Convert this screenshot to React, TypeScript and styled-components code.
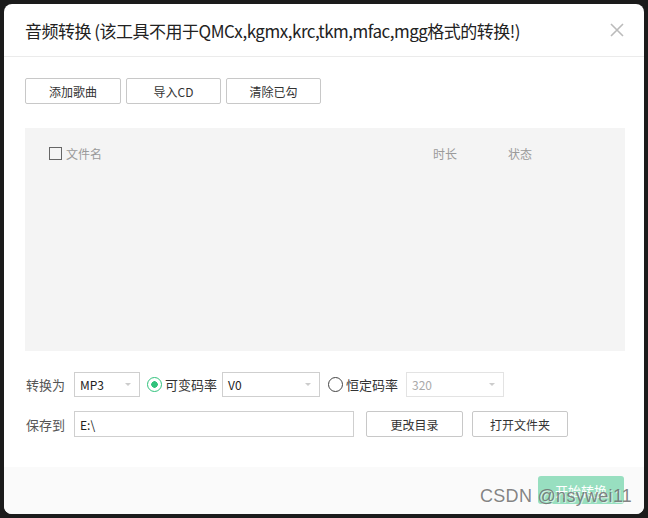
import styled, { createGlobalStyle } from 'styled-components';

const GlobalStyle = createGlobalStyle`
  html, body {
    margin: 0;
    padding: 0;
    background: #1b1b1b;
    font-family: "Noto Sans CJK SC", "Noto Sans", sans-serif;
  }
`;

const Page = styled.div`
  width: 648px;
  height: 518px;
  padding: 4px;
  box-sizing: border-box;
  position: relative;
`;

const Dialog = styled.div`
  width: 640px;
  height: 510px;
  background: #fff;
  border-radius: 8px;
  display: flex;
  flex-direction: column;
  overflow: hidden;
`;

const Header = styled.div`
  height: 52px;
  border-bottom: 1px solid #ebebeb;
  display: flex;
  align-items: center;
  justify-content: space-between;
  padding: 0 20px 0 21px;
  flex-shrink: 0;
`;

const Title = styled.h1`
  margin: 0;
  font-size: 17px;
  font-weight: 400;
  color: #222;
  letter-spacing: -0.5px;
`;

const Close = styled.button`
  border: none;
  background: none;
  padding: 0;
  width: 14px;
  height: 14px;
  display: flex;
  color: #bbb;
`;

const Body = styled.div`
  flex: 1;
  padding: 21px 19px 0 21px;
  display: flex;
  flex-direction: column;
`;

const Toolbar = styled.div`
  display: flex;
  gap: 5px;
`;

const Button = styled.button<{ $w?: number }>`
  width: ${({ $w }) => $w ?? 95}px;
  height: 26px;
  box-sizing: border-box;
  border: 1px solid #c8c8c8;
  border-radius: 2px;
  background: #fff;
  color: #333;
  font-family: inherit;
  font-size: 12px;
  padding: 0;
`;

const Table = styled.div`
  margin-top: 24px;
  height: 223px;
  background: #f4f4f4;
`;

const TableHead = styled.div`
  display: grid;
  grid-template-columns: 384px 75px auto;
  align-items: center;
  padding: 17px 0 0 24px;
  color: #9a9a9a;
  font-size: 12px;
`;

const NameCell = styled.div`
  display: flex;
  align-items: center;
  gap: 4px;
`;

const CheckBox = styled.span`
  width: 11px;
  height: 11px;
  border: 1px solid #666;
  display: inline-block;
`;

const FormRow = styled.div<{ $top: number }>`
  display: flex;
  align-items: center;
  margin-top: ${({ $top }) => $top}px;
  font-size: 13px;
  color: #444;
`;

const Label = styled.span`
  width: 48px;
  padding-left: 1px;
  flex-shrink: 0;
  color: #555;
`;

const Select = styled.div<{ $w: number; $disabled?: boolean }>`
  width: ${({ $w }) => $w}px;
  height: 25px;
  box-sizing: border-box;
  border: 1px solid ${({ $disabled }) => ($disabled ? '#e3e3e3' : '#cfcfcf')};
  display: flex;
  align-items: center;
  justify-content: space-between;
  padding: 0 8px 0 5px;
  font-size: 12px;
  color: ${({ $disabled }) => ($disabled ? '#aaa' : '#222')};
  background: #fff;
`;

const Caret = styled.span`
  width: 0;
  height: 0;
  border-left: 3px solid transparent;
  border-right: 3px solid transparent;
  border-top: 3px solid #ccc;
`;

const Radio = styled.label<{ $checked?: boolean; $ml: number; $mr: number }>`
  display: flex;
  align-items: center;
  gap: 3px;
  margin: 0 ${({ $mr }) => $mr}px 0 ${({ $ml }) => $ml}px;
  color: #333;
  &::before {
    content: '';
    width: 13px;
    height: 13px;
    border-radius: 50%;
    border: 1.5px solid ${({ $checked }) => ($checked ? '#31c27c' : '#444')};
    background: ${({ $checked }) =>
      $checked ? 'radial-gradient(circle, #31c27c 0 3px, #fff 3.5px)' : '#fff'};
  }
`;

const PathInput = styled.div`
  width: 280px;
  height: 26px;
  box-sizing: border-box;
  border: 1px solid #cfcfcf;
  display: flex;
  align-items: center;
  padding-left: 5px;
  font-size: 12px;
  color: #222;
  margin-right: 12px;
`;

const Footer = styled.div`
  height: 47px;
  background: #fafafa;
  display: flex;
  justify-content: flex-end;
  align-items: flex-start;
  padding: 9px 20px 0 0;
  box-sizing: border-box;
  flex-shrink: 0;
`;

const StartButton = styled.button`
  width: 86px;
  height: 28px;
  border: none;
  border-radius: 3px;
  background: #98dfc0;
  color: #fff;
  font-family: inherit;
  font-size: 13px;
`;

const Watermark = styled.div`
  position: absolute;
  left: 480px;
  top: 486px;
  font-family: "Liberation Sans", Arial, sans-serif;
  font-size: 18px;
  color: rgba(110, 110, 110, 0.85);
  text-shadow: 1px 1px 0 rgba(255, 255, 255, 0.6);
  letter-spacing: 0.3px;
`;

export default function App() {
  return (
    <>
      <GlobalStyle />
      <Page>
        <Dialog>
          <Header>
            <Title>音频转换 (该工具不用于QMCx,kgmx,krc,tkm,mfac,mgg格式的转换!)</Title>
            <Close aria-label="关闭">
              <svg width="14" height="14" viewBox="0 0 14 14">
                <path d="M1 1L13 13M13 1L1 13" stroke="currentColor" strokeWidth="1.6" />
              </svg>
            </Close>
          </Header>
          <Body>
            <Toolbar>
              <Button $w={96}>添加歌曲</Button>
              <Button>导入CD</Button>
              <Button>清除已勾</Button>
            </Toolbar>
            <Table>
              <TableHead>
                <NameCell>
                  <CheckBox />
                  文件名
                </NameCell>
                <span>时长</span>
                <span>状态</span>
              </TableHead>
            </Table>
            <FormRow $top={21}>
              <Label>转换为</Label>
              <Select $w={66}>
                MP3 <Caret />
              </Select>
              <Radio $checked $ml={7} $mr={5}>可变码率</Radio>
              <Select $w={98}>
                V0 <Caret />
              </Select>
              <Radio $ml={8} $mr={8}>恒定码率</Radio>
              <Select $w={98} $disabled>
                320 <Caret />
              </Select>
            </FormRow>
            <FormRow $top={14}>
              <Label>保存到</Label>
              <PathInput>E:\</PathInput>
              <Button $w={97}>更改目录</Button>
              <span style={{ width: 9 }} />
              <Button $w={96}>打开文件夹</Button>
            </FormRow>
          </Body>
          <Footer>
            <StartButton>开始转换</StartButton>
          </Footer>
        </Dialog>
        <Watermark>CSDN @nsywei11</Watermark>
      </Page>
    </>
  );
}
